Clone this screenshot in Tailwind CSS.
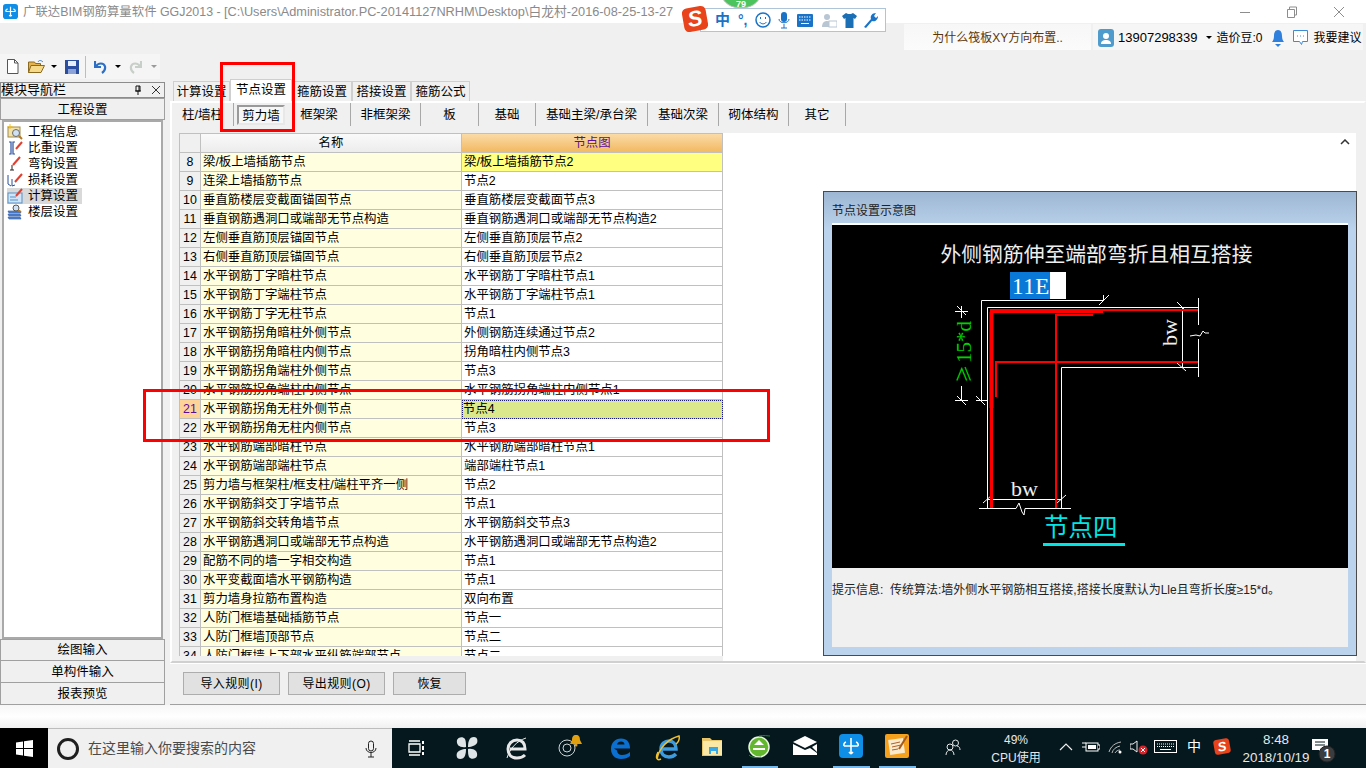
<!DOCTYPE html>
<html lang="zh-CN">
<head>
<meta charset="utf-8">
<title>GGJ2013</title>
<script src="https://cdn.jsdelivr.net/npm/@tailwindcss/browser@4"></script>
</head>
<body class="m-0">
<div class="relative w-[1366px] h-[768px] overflow-hidden flex flex-col bg-[#f0f0f0] text-[12px] text-black font-['Liberation_Sans','Noto_Sans_CJK_SC',sans-serif]">

  <!-- Title bar -->
  <div class="h-[23px] bg-white flex items-center shrink-0 relative">
    <svg class="ml-[3px] w-[15px] h-[15px]" viewBox="0 0 16 16"><rect width="16" height="16" rx="3" fill="#0f8ee8"/><path d="M8 3v10M3 8h10M5 5.500a2 2 0 0 0-2 2.500M11 5.500a2 2 0 0 1 2 2.500M8 13l-1.500-1M8 13l1.500-1" stroke="#fff" stroke-width="1.300" fill="none"/></svg>
    <span class="ml-[5px] leading-[23px] whitespace-pre text-[#8a8a8a]"><span class="text-[12.400px]">广联达BIM钢筋算量软件 GGJ2013 - </span><span class="text-[12.750px]">[C:\Users\Administrator.PC-20141127NRHM\Desktop\白龙村-2016-08-25-13-27</span></span>
    <div class="absolute left-[1230px] top-0 h-[23px] flex items-center gap-[33px]">
      <svg class="w-[14px] h-[14px] ml-[8px]" viewBox="0 0 14 14"><path d="M2 7.500h10" stroke="#8d8d8d"/></svg>
      <svg class="w-[14px] h-[14px]" viewBox="0 0 14 14"><path d="M2.500 4.500h7v8h-7zM4.500 4.500v-2.500h7v8h-2" stroke="#8d8d8d" fill="none"/></svg>
      <svg class="w-[14px] h-[14px]" viewBox="0 0 14 14"><path d="M2 2l10 10M12 2L2 12" stroke="#8d8d8d"/></svg>
    </div>
  </div>

  <!-- Account strip -->
  <div class="h-[29px] shrink-0 flex items-start justify-end pr-[3px]">
    <div class="mt-px w-[187px] h-[26px] bg-gradient-to-b from-[#f7f7f7] to-[#fbfbfb] text-center leading-[29px] text-[#5b3508]">为什么筏板XY方向布置..</div>
    <div class="mt-px ml-[2px] h-[26px] w-[270px] bg-[#f6f6f6] flex items-center pl-[5px] pt-px">
      <svg class="w-[16px] h-[18px]" viewBox="0 0 16 18"><rect width="16" height="18" rx="3" fill="#4f9bcb"/><circle cx="8" cy="7" r="3" fill="#fff"/><path d="M3 15c0-3 2-4 5-4s5 1 5 4z" fill="#fff"/></svg>
      <span class="ml-[4px] text-[13px]">13907298339</span>
      <span class="ml-[8px] w-0 h-0 border-x-[3px] border-x-transparent border-t-[3px] border-t-black"></span>
      <span class="ml-[5px] whitespace-nowrap">造价豆:0</span>
      <svg class="ml-[8px] w-[14px] h-[18px]" viewBox="0 0 14 18"><path d="M7 1c3 0 4 3 4 6s1 5 2 6H1c1-1 2-3 2-6s1-6 4-6z" fill="#2f7fdc"/><path d="M4 15h6l-3 3z" fill="#2f7fdc"/></svg>
      <svg class="ml-[7px] w-[17px] h-[18px]" viewBox="0 0 17 18"><path d="M1.500 1.500h14v11h-5l-1 3-2-3h-6z" fill="#fff" stroke="#3c8bd4"/><path d="M5 7h1M8 7h1M11 7h1" stroke="#3c8bd4"/></svg>
      <span class="ml-[5px] whitespace-nowrap">我要建议</span>
    </div>
  </div>

  <!-- Toolbar -->
  <div class="h-[28px] shrink-0 flex items-start">
    <div class="mt-[2px] h-[25px] w-[160px] bg-[#f5f5f5] flex items-center pl-[6px]">
      <svg class="w-[13px] h-[15px]" viewBox="0 0 13 15"><path d="M1.500.5h7l3.500 3.500v10.500H1.500z" fill="#fff" stroke="#555"/><path d="M8.500.5v3.500h3.500" fill="none" stroke="#555"/></svg>
      <svg class="ml-[9px] w-[17px] h-[15px]" viewBox="0 0 17 15"><path d="M.5 3h6l1 1.500h5v9H.5z" fill="#e6b24c" stroke="#8a6a20"/><path d="M3 6.500h13.500l-3.500 7H.5z" fill="#f7d98a" stroke="#8a6a20"/><path d="M10 3c1-2 3-2 5 0" stroke="#3a7fc5" fill="none"/></svg>
      <span class="ml-[6px] w-0 h-0 border-x-[3px] border-x-transparent border-t-[3px] border-t-black"></span>
      <svg class="ml-[8px] w-[14px] h-[14px]" viewBox="0 0 14 14"><rect width="14" height="14" fill="#2b4f9e"/><rect x="3" y="1" width="8" height="5" fill="#e8eefc"/><rect x="3" y="9" width="8" height="5" fill="#8ba3d8"/></svg>
      <span class="ml-[6px] w-px h-[22px] bg-[#bdbdbd]"></span>
      <svg class="ml-[8px] w-[13px] h-[14px]" viewBox="0 0 13 14"><path d="M1 1v6h6M2 6.500c2-4 8-4 9 0 .5 2.500-1 5-3 6.500" stroke="#2d6fc4" stroke-width="2.200" fill="none"/></svg>
      <span class="ml-[8px] w-0 h-0 border-x-[3px] border-x-transparent border-t-[3px] border-t-black"></span>
      <svg class="ml-[8px] w-[13px] h-[14px]" viewBox="0 0 13 14"><path d="M12 1v6H6M11 6.500c-2-4-8-4-9 0-.5 2.500 1 5 3 6.500" stroke="#c8cfc8" stroke-width="2.200" fill="none"/></svg>
      <span class="ml-[9px] w-0 h-0 border-x-[3px] border-x-transparent border-t-[3px] border-t-[#9a9a9a]"></span>
    </div>
  </div>

  <!-- Main area -->
  <div class="h-[625px] shrink-0 flex items-stretch">
    <!-- Navigator -->
    <div class="w-[165px] shrink-0 mt-[2px] flex flex-col">
      <div class="h-[16px] border border-[#8c8c8c] bg-[#f0f0f0] flex items-center justify-between text-[13px] leading-[14px] pr-[3px]">
        <span>模块导航栏</span>
        <span class="flex items-center gap-[8px]">
          <svg class="w-[10px] h-[10px]" viewBox="0 0 10 10"><path d="M3 1h4v5H3zM2 6h6M5 6v4M6 1v5" stroke="#111" fill="none"/></svg>
          <svg class="w-[10px] h-[10px]" viewBox="0 0 10 10"><path d="M1 1l8 8M9 1L1 9" stroke="#333" fill="none"/></svg>
        </span>
      </div>
      <div class="h-[22px] border border-[#a0a0a0] bg-[#f0f0f0] text-center leading-[22px] text-[12.500px]">工程设置</div>
      <div class="h-[519px] mx-[2px] border-2 border-[#a9a9a9] bg-white pt-[2px] pl-[3px]">
        <div class="h-[16px] flex items-center">
          <svg class="w-[16px] h-[16px]" viewBox="0 0 16 16"><rect x="1" y="3" width="12" height="10" fill="#f3e2a8" stroke="#a08a4a"/><circle cx="9" cy="9" r="3.500" fill="#cfe2f5" stroke="#6b6b6b"/><path d="M12 12l3 3" stroke="#b07a2a" stroke-width="2"/><path d="M3 0v5M.5 2.500h5" stroke="#e8c040"/></svg>
          <span class="ml-[5px] text-[12.500px] leading-[16px]">工程信息</span>
        </div>
        <div class="h-[16px] flex items-center">
          <svg class="w-[16px] h-[16px]" viewBox="0 0 16 16"><path d="M2 2h2v12H2M8 2H6v12h2" stroke="#2a4f9e" fill="none" stroke-width="1.200"/><path d="M9 9l6-7" stroke="#e04030" stroke-width="2"/></svg>
          <span class="ml-[5px] text-[12.500px] leading-[16px]">比重设置</span>
        </div>
        <div class="h-[16px] flex items-center">
          <svg class="w-[16px] h-[16px]" viewBox="0 0 16 16"><path d="M5 9v5M3 14h4" stroke="#222" fill="none"/><path d="M6 9l7-8" stroke="#e04030" stroke-width="2"/></svg>
          <span class="ml-[5px] text-[12.500px] leading-[16px]">弯钩设置</span>
        </div>
        <div class="h-[16px] flex items-center">
          <svg class="w-[16px] h-[16px]" viewBox="0 0 16 16"><path d="M1 3v9l3 2M5 7v7l3-1" stroke="#2a4f9e" fill="none"/><path d="M8 10l7-8" stroke="#e04030" stroke-width="2"/></svg>
          <span class="ml-[5px] text-[12.500px] leading-[16px]">损耗设置</span>
        </div>
        <div class="h-[16px] flex items-center bg-[#d9d9d9] w-[75px]">
          <svg class="w-[16px] h-[16px]" viewBox="0 0 16 16"><rect x="1" y="5" width="14" height="10" fill="#cfe6fa" stroke="#5a8fc5"/><path d="M3 9h6M3 12h8" stroke="#5a8fc5"/><path d="M9 8l6-7" stroke="#e04030" stroke-width="2"/></svg>
          <span class="ml-[5px] text-[12.500px] leading-[16px]">计算设置</span>
        </div>
        <div class="h-[16px] flex items-center">
          <svg class="w-[16px] h-[16px]" viewBox="0 0 16 16"><path d="M1 7h12l1 2H2zM1 10h12l1 2H2zM1 13h12l1 2H2z" fill="#5b8bd8" stroke="#1f4fa0" stroke-width=".6"/><circle cx="9" cy="4" r="3" fill="#cfe2f5" stroke="#555"/><path d="M11 6l3 2" stroke="#b07a2a" stroke-width="2"/></svg>
          <span class="ml-[5px] text-[12.500px] leading-[16px]">楼层设置</span>
        </div>
      </div>
      <div class="h-[22px] border border-[#a0a0a0] text-center leading-[21px] text-[12.500px]">绘图输入</div>
      <div class="h-[22px] border-x border-b border-[#a0a0a0] text-center pt-px leading-[21px] text-[12.500px]">单构件输入</div>
      <div class="h-[22px] border-x border-b border-[#a0a0a0] text-center pt-px leading-[21px] text-[12.500px]">报表预览</div>
    </div>

    <!-- Settings -->
    <div class="ml-[5px] w-[1196px] flex flex-col relative">
      <!-- Tabs -->
      <div class="h-[21px] shrink-0 flex items-end pl-[3px] text-[12.500px] relative z-10">
        <div class="w-[57px] h-[20px] mt-[2px] border border-b-0 border-[#cfcfcf] bg-[#f0f0f0] text-center leading-[20px]">计算设置</div>
        <div class="w-[62px] h-[22px] bg-white border border-b-0 border-[#cfcfcf] text-center leading-[20px]">节点设置</div>
        <div class="w-[60px] h-[20px] border border-b-0 border-[#cfcfcf] text-center leading-[20px]">箍筋设置</div>
        <div class="w-[59px] h-[20px] border border-b-0 border-[#cfcfcf] text-center leading-[20px]">搭接设置</div>
        <div class="w-[59px] h-[20px] border border-b-0 border-[#cfcfcf] text-center leading-[20px]">箍筋公式</div>
      </div>
      <!-- Page -->
      <div class="h-[562px] shrink-0 border-2 border-white border-r-[#f0f0f0] border-b-[#d0d0d0] bg-[#f0f0f0] flex flex-col">
        <div class="h-[23px] shrink-0 flex items-stretch text-[12.500px]">
          <div class="w-[62px] pl-[10px] leading-[25px] border-r border-[#a8a8a8] whitespace-nowrap">柱/墙柱</div>
          <div class="w-[54px] flex items-center justify-center"><div class="w-[48px] h-[20px] border-2 border-[#9a9a9a] border-b-[#e8e8e8] border-r-[#e8e8e8] bg-[#f7f7f7] text-center leading-[18px]">剪力墙</div></div>
          <div class="w-[63px] text-center leading-[25px] border-r border-[#a8a8a8]">框架梁</div>
          <div class="w-[70px] text-center leading-[25px] border-r border-[#a8a8a8]">非框架梁</div>
          <div class="w-[58px] text-center leading-[25px] border-r border-[#a8a8a8]">板</div>
          <div class="w-[57px] text-center leading-[25px] border-r border-[#a8a8a8]">基础</div>
          <div class="w-[112px] text-center leading-[25px] border-r border-[#a8a8a8] whitespace-nowrap">基础主梁/承台梁</div>
          <div class="w-[71px] text-center leading-[25px] border-r border-[#a8a8a8]">基础次梁</div>
          <div class="w-[70px] text-center leading-[25px] border-r border-[#a8a8a8]">砌体结构</div>
          <div class="w-[57px] text-center leading-[25px] border-r border-[#a8a8a8]">其它</div>
        </div>
        <div class="h-[7px] shrink-0"></div>
        <div class="flex h-[528px] shrink-0 pl-[7px] items-start">
          <!-- Grid -->
          <div class="w-[544px] h-[523px] overflow-hidden shrink-0 grid grid-cols-[21px_261px_261px] auto-rows-[19px] bg-[#f0f0f0] border-l border-t border-[#c0c0c0] text-[12.400px] [&>div]:border-r [&>div]:border-b [&>div]:border-[#c0c0c0] [&>div]:leading-[18px] [&>div]:whitespace-nowrap [&>div]:overflow-hidden">
            <div class="bg-[#f0f0f0]"></div><div class="bg-gradient-to-b from-[#fafafa] to-[#ececec] text-center">名称</div><div class="bg-gradient-to-b from-[#fadba6] to-[#f2b95f] text-center text-[#5c0f9b]">节点图</div>
            <div class="bg-[#f0f0f0] text-center">8</div><div class="bg-[#ffffe0] pl-[2px]">梁/板上墙插筋节点</div><div class="bg-[#ffff80] pl-[2px]">梁/板上墙插筋节点2</div>
            <div class="bg-[#f0f0f0] text-center">9</div><div class="bg-[#ffffe0] pl-[2px]">连梁上墙插筋节点</div><div class="bg-white pl-[2px]">节点2</div>
            <div class="bg-[#f0f0f0] text-center">10</div><div class="bg-[#ffffe0] pl-[2px]">垂直筋楼层变截面锚固节点</div><div class="bg-white pl-[2px]">垂直筋楼层变截面节点3</div>
            <div class="bg-[#f0f0f0] text-center">11</div><div class="bg-[#ffffe0] pl-[2px]">垂直钢筋遇洞口或端部无节点构造</div><div class="bg-white pl-[2px]">垂直钢筋遇洞口或端部无节点构造2</div>
            <div class="bg-[#f0f0f0] text-center">12</div><div class="bg-[#ffffe0] pl-[2px]">左侧垂直筋顶层锚固节点</div><div class="bg-white pl-[2px]">左侧垂直筋顶层节点2</div>
            <div class="bg-[#f0f0f0] text-center">13</div><div class="bg-[#ffffe0] pl-[2px]">右侧垂直筋顶层锚固节点</div><div class="bg-white pl-[2px]">右侧垂直筋顶层节点2</div>
            <div class="bg-[#f0f0f0] text-center">14</div><div class="bg-[#ffffe0] pl-[2px]">水平钢筋丁字暗柱节点</div><div class="bg-white pl-[2px]">水平钢筋丁字暗柱节点1</div>
            <div class="bg-[#f0f0f0] text-center">15</div><div class="bg-[#ffffe0] pl-[2px]">水平钢筋丁字端柱节点</div><div class="bg-white pl-[2px]">水平钢筋丁字端柱节点1</div>
            <div class="bg-[#f0f0f0] text-center">16</div><div class="bg-[#ffffe0] pl-[2px]">水平钢筋丁字无柱节点</div><div class="bg-white pl-[2px]">节点1</div>
            <div class="bg-[#f0f0f0] text-center">17</div><div class="bg-[#ffffe0] pl-[2px]">水平钢筋拐角暗柱外侧节点</div><div class="bg-white pl-[2px]">外侧钢筋连续通过节点2</div>
            <div class="bg-[#f0f0f0] text-center">18</div><div class="bg-[#ffffe0] pl-[2px]">水平钢筋拐角暗柱内侧节点</div><div class="bg-white pl-[2px]">拐角暗柱内侧节点3</div>
            <div class="bg-[#f0f0f0] text-center">19</div><div class="bg-[#ffffe0] pl-[2px]">水平钢筋拐角端柱外侧节点</div><div class="bg-white pl-[2px]">节点3</div>
            <div class="bg-[#f0f0f0] text-center">20</div><div class="bg-[#ffffe0] pl-[2px]">水平钢筋拐角端柱内侧节点</div><div class="bg-white pl-[2px]">水平钢筋拐角端柱内侧节点1</div>
            <div class="bg-[#fed398] text-center text-[#5c0f9b]">21</div><div class="bg-[#ffffe0] pl-[2px]">水平钢筋拐角无柱外侧节点</div><div class="bg-[#dbe98c] pl-[1px] outline-1 outline-dotted -outline-offset-1 outline-[#1a1a80]">节点4</div>
            <div class="bg-[#f0f0f0] text-center">22</div><div class="bg-[#ffffe0] pl-[2px]">水平钢筋拐角无柱内侧节点</div><div class="bg-white pl-[2px]">节点3</div>
            <div class="bg-[#f0f0f0] text-center">23</div><div class="bg-[#ffffe0] pl-[2px]">水平钢筋端部暗柱节点</div><div class="bg-white pl-[2px]">水平钢筋端部暗柱节点1</div>
            <div class="bg-[#f0f0f0] text-center">24</div><div class="bg-[#ffffe0] pl-[2px]">水平钢筋端部端柱节点</div><div class="bg-white pl-[2px]">端部端柱节点1</div>
            <div class="bg-[#f0f0f0] text-center">25</div><div class="bg-[#ffffe0] pl-[2px]">剪力墙与框架柱/框支柱/端柱平齐一侧</div><div class="bg-white pl-[2px]">节点2</div>
            <div class="bg-[#f0f0f0] text-center">26</div><div class="bg-[#ffffe0] pl-[2px]">水平钢筋斜交丁字墙节点</div><div class="bg-white pl-[2px]">节点1</div>
            <div class="bg-[#f0f0f0] text-center">27</div><div class="bg-[#ffffe0] pl-[2px]">水平钢筋斜交转角墙节点</div><div class="bg-white pl-[2px]">水平钢筋斜交节点3</div>
            <div class="bg-[#f0f0f0] text-center">28</div><div class="bg-[#ffffe0] pl-[2px]">水平钢筋遇洞口或端部无节点构造</div><div class="bg-white pl-[2px]">水平钢筋遇洞口或端部无节点构造2</div>
            <div class="bg-[#f0f0f0] text-center">29</div><div class="bg-[#ffffe0] pl-[2px]">配筋不同的墙一字相交构造</div><div class="bg-white pl-[2px]">节点1</div>
            <div class="bg-[#f0f0f0] text-center">30</div><div class="bg-[#ffffe0] pl-[2px]">水平变截面墙水平钢筋构造</div><div class="bg-white pl-[2px]">节点1</div>
            <div class="bg-[#f0f0f0] text-center">31</div><div class="bg-[#ffffe0] pl-[2px]">剪力墙身拉筋布置构造</div><div class="bg-white pl-[2px]">双向布置</div>
            <div class="bg-[#f0f0f0] text-center">32</div><div class="bg-[#ffffe0] pl-[2px]">人防门框墙基础插筋节点</div><div class="bg-white pl-[2px]">节点一</div>
            <div class="bg-[#f0f0f0] text-center">33</div><div class="bg-[#ffffe0] pl-[2px]">人防门框墙顶部节点</div><div class="bg-white pl-[2px]">节点二</div>
            <div class="bg-[#f0f0f0] text-center">34</div><div class="bg-[#ffffe0] pl-[2px]">人防门框墙上下部水平纵筋端部节点</div><div class="bg-white pl-[2px]">节点二</div>
          </div>
          <!-- White area and scroll -->
          <div class="w-[633px] h-[528px] bg-white relative flex justify-end pr-[3px]">
            <div class="w-[16px] h-[18px] flex items-center justify-center">
              <svg class="w-[10px] h-[6px]" viewBox="0 0 10 6"><path d="M1 5l4-4 4 4" stroke="#333" stroke-width="1.500" fill="none"/></svg>
            </div>
            <!-- Floating dialog -->
            <div class="absolute left-[100px] top-[58px] w-[534px] h-[465px] border border-[#4a4a4a] bg-gradient-to-b from-[#9db6d3] to-[#bbd3ec] to-[8%] flex flex-col px-[8px] pb-[8px]">
              <div class="h-[31px] shrink-0 flex items-end pb-[5px] text-[12px] text-[#222] leading-[14px]">节点设置示意图</div>
              <div class="h-[343px] shrink-0 bg-black border-t-2 border-t-white relative box-content">
                <svg class="absolute left-0 top-0" width="516" height="343" viewBox="832 225 516 343">
                  <g fill="none" stroke="#fff" stroke-width="1">
                    <polyline points="981.500,400 981.500,300.500 1103,300.500"/>
                    <polyline points="987.500,508 987.500,307.500 1198,307.500"/>
                    <polyline points="1061.500,508 1061.500,367.500 1198,367.500"/>
                    <path d="M1198.500 298v79M1182.500 308v60M987 499.500h75M979 508.500h92M976 400.500h12M955 311.500h13M955 400.500h13M961.500 306v12M961.500 386v14M1103.500 295v6"/>
                    <path d="M1099 305l10-10M1177 302l9 9M1177 363l9 8M957 306l9 9M957 396l9 9M976 396l9 9M983 503l9-8M1057 503l9-8"/>
                  </g>
                  <rect x="1012" y="505" width="16" height="6" fill="#000"/>
                  <polyline points="1012,508.500 1016,508.500 1019,503 1022,512 1024,515 1025,508.500 1029,508.500" fill="none" stroke="#fff"/>
                  <rect x="1196" y="325" width="5" height="14" fill="#000"/>
                  <polyline points="1190,336 1196,335 1200,336 1203,331 1205,333 1209,333" fill="none" stroke="#fff"/>
                  <g fill="none" stroke="#f00">
                    <path d="M991.500 312v96" stroke-width="4"/>
                    <path d="M991.500 408v100" stroke-width="3"/>
                    <path d="M990 311h113" stroke-width="4"/>
                    <path d="M1103 310h95" stroke-width="2"/>
                    <path d="M1093 315h-37v193" stroke-width="2"/>
                    <path d="M996 397v-35h202" stroke-width="2"/>
                  </g>
                  <rect x="1010" y="272" width="56" height="27" fill="#fff"/>
                  <rect x="1010" y="272" width="40" height="27" fill="#0a78d7"/>
                  <g font-family="Liberation Serif, Noto Sans CJK SC, serif">
                    <text x="1096.500" y="262" text-anchor="middle" fill="#eee" font-size="20.800">外侧钢筋伸至端部弯折且相互搭接</text>
                    <text x="1012" y="294" fill="#fff" font-size="23" letter-spacing=".5">11E</text>
                    <text x="971" y="383" transform="rotate(-90 971 383)" fill="#00d000" font-size="21"><tspan font-family="Noto Sans CJK SC" font-size="18">≥</tspan><tspan dx="2">15*d</tspan></text>
                    <text x="1177" y="346" transform="rotate(-90 1177 346)" fill="#eee" font-size="22">bw</text>
                    <text x="1011" y="496" fill="#eee" font-size="22">bw</text>
                    <text x="1044" y="536" fill="#00e5e5" font-size="24.500">节点四</text>
                  </g>
                  <rect x="1043" y="543" width="82" height="3" fill="#00e5e5"/>
                </svg>
              </div>
              <div class="flex-1 bg-[#f0f0f0] pt-[14px] whitespace-pre text-[12px] text-[#222] leading-[16px]">提示信息:  传统算法:墙外侧水平钢筋相互搭接,搭接长度默认为Lle且弯折长度≥15*d。</div>
            </div>
          </div>
        </div>
      </div>
      <!-- Bottom buttons -->
      <div class="flex-1 border-b border-[#a0a0a0] border-t border-t-white flex items-center gap-[8px] pl-[13px] pb-[2px]">
        <div class="w-[97px] h-[23px] bg-[#e1e1e1] border border-[#adadad] text-center leading-[22px] tracking-[0.4px]">导入规则(I)</div>
        <div class="w-[97px] h-[23px] bg-[#e1e1e1] border border-[#adadad] text-center leading-[22px] tracking-[0.4px]">导出规则(O)</div>
        <div class="w-[73px] h-[23px] bg-[#e1e1e1] border border-[#adadad] text-center leading-[22px]">恢复</div>
      </div>
    </div>
  </div>

  <!-- Strip above taskbar -->
  <div class="h-[23px] shrink-0 bg-gradient-to-b from-[#f6f6f6] via-white to-[#f0f0f0]"></div>

  <!-- Taskbar -->
  <div class="h-[40px] shrink-0 bg-[#05181e] flex items-stretch relative text-white">
    <div class="w-[48px] bg-black flex items-center justify-center">
      <svg class="w-[17px] h-[17px]" viewBox="0 0 17 17"><path d="M0 2.500l7-1v6.500H0zM8 1.300l9-1.300v8H8zM0 9h7v6.500l-7-1zM8 9h9v8l-9-1.300z" fill="#fff"/></svg>
    </div>
    <div class="w-[344px] bg-[#f0f0f0] border-t border-[#bdbdbd] flex items-center pl-[9px] text-[#4a4a4a]">
      <span class="w-[22px] h-[22px] rounded-full border-[3px] border-[#1f1f1f]"></span>
      <span class="ml-[9px] text-[14px] whitespace-nowrap">在这里输入你要搜索的内容</span>
      <svg class="ml-[109px] w-[12px] h-[18px]" viewBox="0 0 12 18"><rect x="3.500" y="1" width="5" height="10" rx="2.500" fill="none" stroke="#222"/><path d="M1 8c0 6 10 6 10 0M6 13v4M3 17h6" fill="none" stroke="#222"/></svg>
    </div>
    <!-- Task icons -->
    <div class="w-[530px] flex items-center relative">
      <svg class="absolute left-[16px] top-[12px] w-[17px] h-[16px]" viewBox="0 0 17 16"><path d="M1 4h11v8H1zM1 1h11M1 15h11" stroke="#fff" fill="none" stroke-width="1.300"/><path d="M14 1h2v3h-2zM14 6h2v4h-2zM14 12h2v3h-2z" fill="#fff"/></svg>
      <svg class="absolute left-[64px] top-[8px] w-[22px] h-[24px]" viewBox="0 0 22 24"><g fill="#dfe4e6"><path d="M10 11C4 12 0 9 1 4c1-3 6-4 8-1 1 2 1 5 1 8z"/><path d="M12 11c0-5 1-10 6-10 3 0 4 3 3 6-1 2-5 4-9 4z"/><path d="M12 13c6-1 10 2 9 7-1 3-6 4-8 1-1-2-1-5-1-8z"/><path d="M10 13c0 5-1 10-6 10-3 0-4-3-3-6 1-2 5-4 9-4z"/></g></svg>
      <svg class="absolute left-[114px] top-[8px] w-[22px] h-[24px]" viewBox="0 0 22 24"><path d="M4 13h15c0-6-3-9-8-9S2 8 2 13s3 9 9 9c4 0 6-1 8-3" fill="none" stroke="#e8e8e8" stroke-width="3"/><path d="M1 22c3-10 10-17 19-20" stroke="#e8e8e8" fill="none"/></svg>
      <svg class="absolute left-[165px] top-[5px] w-[28px] h-[26px]" viewBox="0 0 28 26"><circle cx="10" cy="15" r="8" fill="none" stroke="#cfd4d6"/><circle cx="10" cy="15" r="4" fill="none" stroke="#cfd4d6"/><path d="M19 2c-3 0-4 2-4 5l-2 4h12l-2-4c0-3-1-5-4-5z" fill="#e0a00f"/><circle cx="19" cy="12" r="1.500" fill="#e0a00f"/></svg>
      <svg class="absolute left-[218px] top-[8px] w-[22px] h-[24px]" viewBox="0 0 22 24"><path d="M4 12.500h16c0-6-3-10-9-10S1 7 1 13s4 10 10 10c4 0 7-1 9-3v-4c-2 2-5 3-8 3-3 0-5-2-5-4.500zm3-4c.5-2 2-3 4-3s3.500 1 3.500 3z" fill="#0a6fd0"/></svg>
      <svg class="absolute left-[263px] top-[7px] w-[26px] h-[26px]" viewBox="0 0 26 26"><path d="M7 14h14c0-5-3-8-7-8s-8 3-8 8 3 8 8 8c3 0 5-1 7-3" fill="none" stroke="#3d9be0" stroke-width="3.500"/><path d="M2 24C4 13 13 4 24 1c1 3-1 7-3 8M3 17c-3 6-1 9 3 7" fill="none" stroke="#f0c030" stroke-width="1.500"/></svg>
      <svg class="absolute left-[310px] top-[9px] w-[22px] h-[20px]" viewBox="0 0 22 20"><path d="M0 1h8l2 2h10v16H0z" fill="#e8c368"/><rect x="1" y="4" width="19" height="14" fill="#fbe7a6"/><path d="M7 10h9v7h-2v-3H9v3H7z" fill="#39a8e8"/></svg>
      <svg class="absolute left-[356px] top-[7px] w-[23px] h-[24px]" viewBox="0 0 23 24"><circle cx="11" cy="12" r="10" fill="#62b72f" stroke="#e8f5df" stroke-width="1.500"/><path d="M6 10l5-5 5 5zM5 13h12v2H5z" fill="#fff"/><path d="M11 1c5-1 9 0 11 0M1 20c3 3 9 3 12 2" stroke="#1f8a2a" fill="none"/></svg>
      <svg class="absolute left-[401px] top-[8px] w-[24px] h-[20px]" viewBox="0 0 24 20"><path d="M0 6l12-6 12 6-12 6z" fill="#fff"/><path d="M0 8l12 6 5-2 7 5V19H0zM24 8v8l-5-5z" fill="#fff"/></svg>
      <svg class="absolute left-[447px] top-[6px] w-[24px] h-[24px]" viewBox="0 0 24 24"><rect width="24" height="24" rx="4" fill="#0f8ee8"/><path d="M12 4v16M5 12h14M7 8a3 3 0 0 0-2 4M17 8a3 3 0 0 1 2 4M12 20l-2-2M12 20l2-2" stroke="#fff" stroke-width="1.600" fill="none"/></svg>
      <svg class="absolute left-[493px] top-[6px] w-[24px] h-[24px]" viewBox="0 0 24 24"><rect width="24" height="24" rx="2" fill="#f6a11e"/><rect x="4" y="5" width="15" height="15" fill="#fbeacb" transform="rotate(-8 11 12)"/><path d="M6 10l9-2M7 13l9-2M7 16l6-1" stroke="#b0602a"/><path d="M14 15l8-13" stroke="#a85a1a" stroke-width="2"/></svg>
      <span class="absolute left-[350px] w-[36px] bottom-0 h-[2px] bg-[#76b9ed]"></span>
      <span class="absolute left-[441px] w-[37px] bottom-0 h-[2px] bg-[#76b9ed]"></span>
      <span class="absolute left-[487px] w-[37px] bottom-0 h-[2px] bg-[#76b9ed]"></span>
    </div>
    <!-- Tray -->
    <div class="flex-1 relative">
      <svg class="absolute left-[23px] top-[11px] w-[16px] h-[17px]" viewBox="0 0 16 17"><circle cx="10.500" cy="4" r="3" fill="none" stroke="#e8e8e8"/><circle cx="5" cy="8" r="3" fill="none" stroke="#e8e8e8"/><path d="M1 16c0-3 2-5 4-5s4 2 4 5M12 7c2 0 3 2 3 4" fill="none" stroke="#e8e8e8"/></svg>
      <div class="absolute left-[54px] top-[3px] w-[80px] text-center text-[12px] leading-[18px] text-[#e8e8e8]">49%<br>CPU使用</div>
      <svg class="absolute left-[137px] top-[14px] w-[14px] h-[10px]" viewBox="0 0 14 10"><path d="M1 8l6-6 6 6" stroke="#eee" stroke-width="1.200" fill="none"/></svg>
      <svg class="absolute left-[160px] top-[13px] w-[18px] h-[12px]" viewBox="0 0 18 12"><rect x="4" y="2" width="12" height="8" fill="none" stroke="#fff"/><rect x="6" y="4" width="8" height="4" fill="#fff"/><path d="M16 4h2v4h-2M0 2h4M0 6h4" stroke="#fff"/></svg>
      <svg class="absolute left-[186px] top-[13px] w-[15px] h-[13px]" viewBox="0 0 15 13"><path d="M1 11c2-6 6-9 12-10M4 12c1-4 4-6 8-7M7 12c1-2 3-3 5-3" fill="none" stroke="#bdbdbd"/><circle cx="12" cy="11" r="1.500" fill="#fff"/></svg>
      <svg class="absolute left-[208px] top-[12px] w-[18px] h-[15px]" viewBox="0 0 18 15"><path d="M0 4h3l4-3v11L3 9H0z" fill="none" stroke="#eee"/><circle cx="13" cy="10" r="4.500" fill="#d8232a"/><path d="M11 8l4 4M15 8l-4 4" stroke="#fff"/></svg>
      <svg class="absolute left-[232px] top-[12px] w-[23px] h-[13px]" viewBox="0 0 23 13"><rect x=".5" y=".5" width="22" height="12" fill="none" stroke="#fff"/><path d="M3 4h17M3 6.500h17" stroke="#fff" stroke-dasharray="1 1"/><path d="M6 9.500h11" stroke="#fff"/></svg>
      <span class="absolute left-[265px] top-[8px] text-[14px] leading-[20px] text-white">中</span>
      <div class="absolute left-[292px] top-[11px] w-[16px] h-[15px] rounded-[3px] bg-[#e8431a] rotate-[-10deg] text-center text-white font-bold italic text-[13px] leading-[15px]">S</div>
      <div class="absolute left-[304px] top-[3px] w-[100px] text-center text-[13.400px] leading-[18px] text-[#e8e8e8]">8:48<br>2018/10/19</div>
      <svg class="absolute left-[389px] top-[10px] w-[26px] h-[26px]" viewBox="0 0 26 26"><path d="M1 1h16v11h-6l-3 3v-3H1z" fill="#fff"/><path d="M4 4h10M4 7h10" stroke="#05181e"/><circle cx="16" cy="16" r="8" fill="#3a3d3f" stroke="#222"/></svg>
      <span class="absolute left-[401px] top-[17px] w-[8px] text-center font-bold text-[12px] leading-[18px]">1</span>
    </div>
  </div>

  <!-- Sogou IME bar -->
  <div class="absolute left-[700px] top-[8px] w-[186px] h-[24px] bg-white border border-[#b0c4d8] flex items-center text-[#1a73c7]">
    <span class="ml-[14px] text-[15px] font-bold leading-[20px]">中</span>
    <span class="ml-[8px] text-[14px] font-bold leading-[20px]">°,</span>
    <svg class="ml-[7px] w-[16px] h-[16px]" viewBox="0 0 16 16"><circle cx="8" cy="8" r="7" fill="none" stroke="#1a73c7" stroke-width="1.500"/><path d="M5.500 5v2M10.500 5v2M4.500 10c2 2.500 5 2.500 7 0" stroke="#1a73c7" fill="none"/></svg>
    <svg class="ml-[7px] w-[12px] h-[17px]" viewBox="0 0 12 17"><rect x="3" y="0" width="6" height="10" rx="3" fill="#1a73c7"/><path d="M1 7c0 5 10 5 10 0M6 12v4M3 16h6" stroke="#1a73c7" fill="none"/></svg>
    <svg class="ml-[7px] w-[16px] h-[13px]" viewBox="0 0 16 13"><rect width="16" height="13" rx="1" fill="#1a73c7"/><path d="M2 3h12M2 6h12" stroke="#fff" stroke-dasharray="1.500 1"/><path d="M4 9.500h8" stroke="#fff"/></svg>
    <svg class="ml-[8px] w-[16px] h-[15px]" viewBox="0 0 16 15"><circle cx="6" cy="4" r="3" fill="#b8c6d4"/><path d="M1 14c0-4 2-6 5-6s4 1 4 3v3z" fill="#b8c6d4"/><rect x="8" y="8" width="8" height="6" fill="#fff" stroke="#b8c6d4"/></svg>
    <svg class="ml-[5px] w-[15px] h-[15px]" viewBox="0 0 15 15"><path d="M4 0L0 3l2 3 1.500-1v10h8V5L13 6l2-3-4-3-2 1H6z" fill="#1a6fb5"/></svg>
    <svg class="ml-[6px] w-[15px] h-[16px]" viewBox="0 0 15 16"><path d="M1 15l7-8c-1-3 1-6 5-6l-2 3 2 2 2-2c0 4-3 6-6 5l-6 7z" fill="#1a73c7"/></svg>
  </div>
  <div class="absolute left-[683px] top-[7px] w-[24px] h-[24px] rounded-[5px] bg-[#e8431a] rotate-[-10deg] text-center text-white font-bold italic text-[22px] leading-[24px]">S</div>
  <div class="absolute left-[720px] -top-[14px] w-[42px] h-[22px] rounded-b-[18px] bg-[#4cc45e] border border-[#bbb] text-center text-white font-bold text-[9px] leading-[34px]">79</div>

  <!-- Red annotations -->
  <div class="absolute left-[220px] top-[62px] w-[75px] h-[70px] border-[3px] border-[#f00] z-20"></div>
  <div class="absolute left-[143px] top-[389px] w-[627px] h-[53px] border-[3px] border-[#f00] z-20"></div>
</div>
</body>
</html>
